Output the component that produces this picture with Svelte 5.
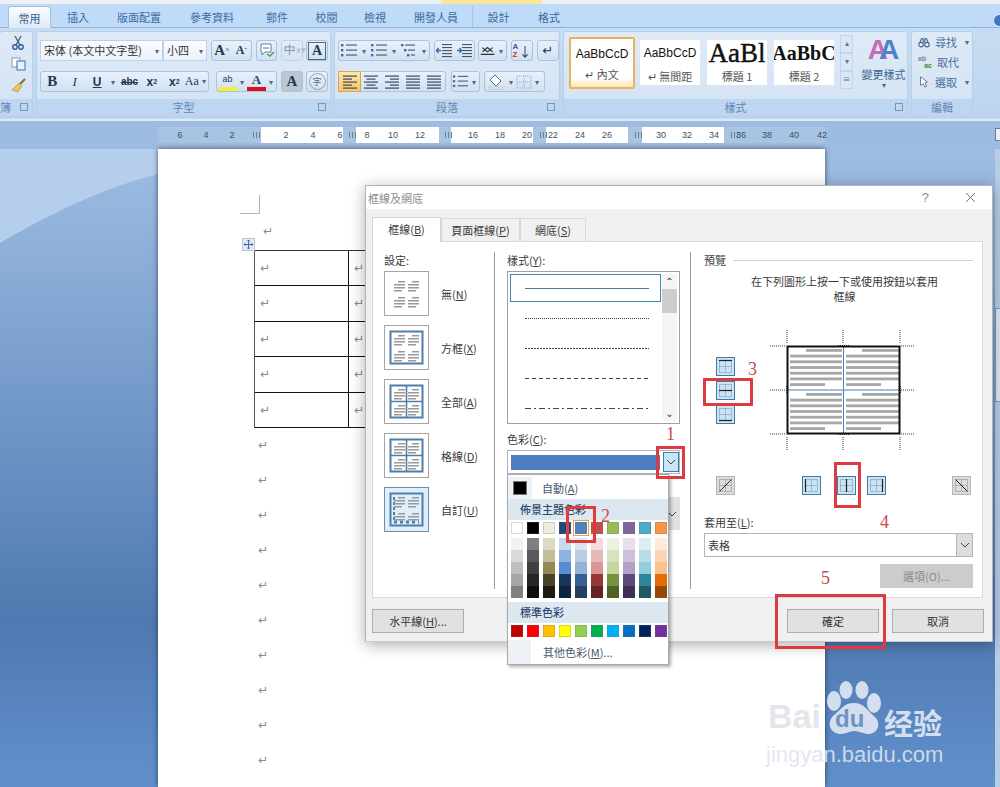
<script>
  const tabs = ['插入', '版面配置', '參考資料', '郵件', '校閱', '檢視', '開發人員'];
  const rulerNumbers = [
    [6, 180], [4, 206], [2, 232], [2, 286], [4, 313], [6, 340], [8, 367], [10, 393], [12, 420],
    [16, 473], [18, 500], [20, 527], [22, 553], [24, 580], [26, 607], [30, 661], [32, 687],
    [34, 714], [36, 741], [38, 767], [40, 794], [42, 822]
  ];
  const rulerWhite = [[261, 82], [356, 83], [451, 82], [546, 82], [642, 82]];
  const rulerHatch = [253, 349, 445, 540, 635, 731];
  const rows = [0, 1, 2, 3, 4];
  const marks = Array.from({ length: 10 }, (_, i) => i);
  const styles = [
    { sample: 'AaBbCcD', caption: '↵ 內文', cls: 'plain', selected: true },
    { sample: 'AaBbCcD', caption: '↵ 無間距', cls: 'plain' },
    { sample: 'AaBl', caption: '標題 1', cls: 'big' },
    { sample: 'AaBbC', caption: '標題 2', cls: 'mid' }
  ];
  const settings = [
    ['無(', 'N', ')', 'none'],
    ['方框(', 'X', ')', 'box'],
    ['全部(', 'A', ')', 'all'],
    ['格線(', 'D', ')', 'grid'],
    ['自訂(', 'U', ')', 'custom']
  ];
  const lineStyles = ['solid', 'dotted', 'dense', 'dashed', 'dashdot'];
  const theme = ['#ffffff', '#000000', '#eeece1', '#1f497d', '#4f81bd', '#c0504d', '#9bbb59', '#8064a2', '#4bacc6', '#f79646'];
  const tints = [
    ['#f2f2f2', '#d9d9d9', '#bfbfbf', '#a6a6a6', '#808080'],
    ['#7f7f7f', '#595959', '#3f3f3f', '#262626', '#0d0d0d'],
    ['#ddd9c3', '#c4bd97', '#938953', '#494429', '#1d1b10'],
    ['#c6d9f0', '#8db3e2', '#548dd4', '#17365d', '#0f243e'],
    ['#dbe5f1', '#b8cce4', '#95b3d7', '#366092', '#244061'],
    ['#f2dcdb', '#e5b9b7', '#d99694', '#953734', '#632423'],
    ['#ebf1dd', '#d7e3bc', '#c3d69b', '#76923c', '#4f6128'],
    ['#e5e0ec', '#ccc1d9', '#b2a2c7', '#5f497a', '#3f3151'],
    ['#dbeef3', '#b7dde8', '#92cddc', '#31859b', '#205867'],
    ['#fdeada', '#fbd5b5', '#fac08f', '#e36c09', '#974806']
  ];
  const standard = ['#c00000', '#ff0000', '#ffc000', '#ffff00', '#92d050', '#00b050', '#00b0f0', '#0070c0', '#002060', '#7030a0'];
  const previewLines = [16, 0, 0, 0, 0, 0, 0];
</script>

{#snippet alignIcon(kind)}
  <svg width="16" height="14" viewBox="0 0 16 14">
    {#each [1, 4, 7, 10, 13] as y, i}
      {@const w = kind === 'full' || i % 2 === 0 ? 14 : 9}
      {@const x = kind === 'left' || kind === 'full' ? 1 : kind === 'center' ? 8 - w / 2 : 15 - w}
      <rect {x} y={y - 0.5} width={w} height="1.2" fill="#3b4a5c" />
    {/each}
  </svg>
{/snippet}

{#snippet listIcon(kind)}
  <svg width="18" height="15" viewBox="0 0 18 15">
    {#each [2, 7, 12] as y, i}
      <rect x={kind === 'multi' ? 1 + i * 3 : 1} y={y - 1} width="2.4" height="2.4" fill="#3a6ea8" />
      <rect x={kind === 'multi' ? 5 + i * 3 : 6} y={y - 0.5} width={kind === 'multi' ? 10 - i * 3 : 11} height="1.1" fill="#4a5563" />
    {/each}
  </svg>
{/snippet}

{#snippet indentIcon(flip)}
  <svg width="17" height="15" viewBox="0 0 17 15">
    {#each [1, 4, 7, 10, 13] as y}
      <rect x="6" {y} width="10" height="1.1" fill="#4a5563" />
    {/each}
    <path d={flip ? 'M1 7.5h4M2.5 5l-2 2.5 2 2.5' : 'M1 7.5h4M3.5 5l2 2.5-2 2.5'} stroke="#2f69a8" stroke-width="1.3" fill="none" />
  </svg>
{/snippet}

{#snippet tableIcon(kind)}
  <svg class="grid-btn" width="19" height="19" viewBox="0 0 19 19">
    <rect x="0.5" y="0.5" width="18" height="18" fill={kind === 'slash' || kind === 'back' ? '#dcdcdc' : '#c9e3f7'} stroke={kind === 'slash' || kind === 'back' ? '#b5b5b5' : '#3f7ca6'} />
    <rect x="3.5" y="3.5" width="12" height="12" fill="none" stroke="#7a8a96" stroke-dasharray="1 1" />
    <path d="M9.5 3.5v12M3.5 9.5h12" stroke="#7a8a96" stroke-dasharray="1 1" fill="none" />
    {#if kind === 'top'}<path d="M3 3.5h13" stroke="#222" stroke-width="1.2" />{/if}
    {#if kind === 'h'}<path d="M3 9.5h13" stroke="#222" stroke-width="1.2" />{/if}
    {#if kind === 'bottom'}<path d="M3 15.5h13" stroke="#222" stroke-width="1.2" />{/if}
    {#if kind === 'left'}<path d="M3.5 3v13" stroke="#222" stroke-width="1.2" />{/if}
    {#if kind === 'v'}<path d="M9.5 3v13" stroke="#222" stroke-width="1.2" />{/if}
    {#if kind === 'right'}<path d="M15.5 3v13" stroke="#222" stroke-width="1.2" />{/if}
    {#if kind === 'slash'}<path d="M3.5 15.5l12-12" stroke="#222" />{/if}
    {#if kind === 'back'}<path d="M3.5 3.5l12 12" stroke="#222" />{/if}
  </svg>
{/snippet}

{#snippet settingIcon(kind)}
  <svg width="35" height="35" viewBox="0 0 35 35">
    {#if kind !== 'none'}
      <rect x="1.5" y="1.5" width="32" height="32" fill="none" stroke="#4f7fa8" stroke-width="2" />
    {/if}
    {#if kind === 'all' || kind === 'grid'}
      <path d="M17.5 1v33M1 17.5h33" stroke="#4f7fa8" stroke-width="1.6" />
    {/if}
    {#if kind === 'custom'}
      <path d="M5 5v25" stroke="#4f7fa8" stroke-width="2" stroke-dasharray="3 2" />
      <path d="M5 30h25" stroke="#4f7fa8" stroke-width="3" stroke-dasharray="3 3" />
    {/if}
    {#each [5, 8, 11, 14, 21, 24, 27, 30] as y, i}
      {#if kind !== 'custom' || y < 28}
        <rect x={i % 4 === 0 ? 9 : 5} {y} width={i % 4 === 3 ? 8 : i % 4 === 0 ? 7 : 11} height="1.5" fill="#9a9a9a" />
        <rect x={i % 4 === 0 ? 23 : 19} {y} width={i % 4 === 3 ? 8 : i % 4 === 0 ? 7 : 11} height="1.5" fill="#9a9a9a" />
      {/if}
    {/each}
  </svg>
{/snippet}

{#snippet chevron()}
  <svg width="10" height="6" viewBox="0 0 10 6"><path d="M1 1l4 4 4-4" stroke="#444" fill="none" /></svg>
{/snippet}

<div class="app">
  <header class="ribbon">
    <div class="caption-strip"><span class="contextual"></span></div>
    <nav class="tabs">
      <span class="tab active">常用</span>
      {#each tabs as t}<span class="tab">{t}</span>{/each}
      <span class="tab tool first">設計</span>
      <span class="tab tool">格式</span>
    </nav>
    <div class="groups">
      <section class="group clip">
        <div class="group-body clip-tools">
          <svg width="14" height="15" viewBox="0 0 14 15"><path d="M4 1l5 9M10 1L5 10" stroke="#55606e" stroke-width="1.4" fill="none" /><circle cx="4" cy="12" r="2.2" fill="none" stroke="#2f5f98" stroke-width="1.4" /><circle cx="10" cy="12" r="2.2" fill="none" stroke="#2f5f98" stroke-width="1.4" /></svg>
          <svg width="15" height="14" viewBox="0 0 15 14"><rect x="1" y="1" width="8" height="9" fill="#fff" stroke="#8a97a6" /><rect x="6" y="4" width="8" height="9" fill="#e8f1fb" stroke="#3c6fa8" /></svg>
          <svg width="15" height="15" viewBox="0 0 15 15"><path d="M14 1L8 7" stroke="#8d6a36" stroke-width="2" /><path d="M8 5l3 3-4 6-6-2z" fill="#e8c65c" stroke="#a58a3c" stroke-width=".6" /></svg>
        </div>
        <div class="group-label"><span class="cut">簿</span><i class="launcher"></i></div>
      </section>

      <section class="group font">
        <div class="group-body">
          <div class="tool-row">
            <span class="field w123">宋体 (本文中文字型)<b class="caret">▾</b></span>
            <span class="field w44">小四<b class="caret">▾</b></span>
            <span class="seg w41 gap4"><span class="btn serif-b">A<sup>^</sup></span><span class="btn serif-b small">A<sup>ˇ</sup></span></span>
            <span class="seg w21 gap4"><svg width="16" height="15" viewBox="0 0 16 15"><path d="M2 1h10v8H6l-3 3V9H2z" fill="#fff" stroke="#6d7f95" /><path d="M4 5h6" stroke="#5a6b80" /><path d="M8 11l3 2 4-4" stroke="#4aa04a" stroke-width="1.4" fill="none" /></svg></span>
            <span class="seg w22 gap4 dim"><span class="btn">中<small class="tiny">文字</small></span></span>
            <span class="seg w22 gap3"><span class="btn boxed-a">A</span></span>
          </div>
          <div class="tool-row">
            <span class="seg w169">
              <span class="btn serif-b">B</span><span class="btn italic">I</span><span class="btn under">U</span><b class="caret">▾</b>
              <span class="btn strike">abc</span><span class="btn sm">x<sub>2</sub></span><span class="btn sm">x<sup>2</sup></span><span class="btn serif-s">Aa<b class="caret">▾</b></span>
            </span>
            <span class="seg w61 gap7">
              <span class="btn hl">ab</span><b class="caret">▾</b><span class="btn color-a">A</span><b class="caret">▾</b>
            </span>
            <span class="seg w22 gap4 shaded"><span class="btn serif-b">A</span></span>
            <span class="seg w22 gap3"><span class="btn circled">字</span></span>
          </div>
        </div>
        <div class="group-label">字型<i class="launcher"></i></div>
      </section>

      <section class="group para">
        <div class="group-body">
          <div class="tool-row">
            <span class="seg w92">
              <span class="btn">{@render listIcon('bullet')}</span><b class="caret">▾</b>
              <span class="btn">{@render listIcon('number')}</span><b class="caret">▾</b>
              <span class="btn">{@render listIcon('multi')}</span><b class="caret">▾</b>
            </span>
            <span class="seg w41 gap4"><span class="btn">{@render indentIcon(true)}</span><span class="btn">{@render indentIcon(false)}</span></span>
            <span class="seg w29 gap3"><svg width="20" height="14" viewBox="0 0 20 14"><path d="M2 11h16M4 3l6 5 6-5M4 8l6-5 6 5" stroke="#2b3440" stroke-width="1.4" fill="none" /></svg><b class="caret">▾</b></span>
            <span class="seg w22 gap4"><span class="sort"><i>A</i><i class="z">Z</i></span><span class="arrow-d">↓</span></span>
            <span class="seg w22 gap4"><span class="para-mark">↵</span></span>
          </div>
          <div class="tool-row">
            <span class="seg w108">
              <span class="btn on">{@render alignIcon('left')}</span>
              <span class="btn">{@render alignIcon('center')}</span>
              <span class="btn">{@render alignIcon('right')}</span>
              <span class="btn">{@render alignIcon('full')}</span>
              <span class="btn">{@render alignIcon('full')}</span>
            </span>
            <span class="seg w29 gap5"><span class="btn">{@render listIcon('number')}</span><b class="caret">▾</b></span>
            <span class="seg w61 gap4">
              <svg width="18" height="16" viewBox="0 0 18 16"><path d="M7 1l6 6-5 5-6-6z" fill="#fff" stroke="#5b6b7e" /><rect x="1" y="13" width="14" height="2" fill="#e9eff7" stroke="#9aa7b6" stroke-width=".5" /></svg><b class="caret">▾</b>
              <svg width="16" height="14" viewBox="0 0 16 14"><rect x="1" y="1" width="14" height="12" fill="none" stroke="#9aa7b6" stroke-dasharray="1 1" /><path d="M8 1v12M1 7h14" stroke="#9aa7b6" stroke-dasharray="1 1" /></svg><b class="caret">▾</b>
            </span>
          </div>
        </div>
        <div class="group-label">段落<i class="launcher"></i></div>
      </section>

      <section class="group gallery">
        <div class="group-body gallery-body">
          {#each styles as s}
            <div class="style-item" class:selected={s.selected}>
              <span class="sample {s.cls}">{s.sample}</span>
              <span class="style-name">{s.caption}</span>
            </div>
          {/each}
          <div class="gallery-scroll"><i>▴</i><i>▾</i><i>≡</i></div>
          <div class="change-style">
            <span class="twin-a"><b class="pink">A</b><b class="blue">A</b></span>
            <span>變更樣式</span>
            <b class="caret">▾</b>
          </div>
        </div>
        <div class="group-label">樣式<i class="launcher"></i></div>
      </section>

      <section class="group edit">
        <div class="group-body edit-body">
          <div class="edit-row">
            <svg width="14" height="13" viewBox="0 0 14 13"><circle cx="3.5" cy="9" r="2.6" fill="#eaf1f8" stroke="#3b5a7e" stroke-width="1.2" /><circle cx="10.5" cy="9" r="2.6" fill="#eaf1f8" stroke="#3b5a7e" stroke-width="1.2" /><path d="M2 7l2-5h2v5M12 7l-2-5H8v5" fill="none" stroke="#3b5a7e" stroke-width="1.2" /></svg>
            尋找<b class="caret">▾</b>
          </div>
          <div class="edit-row"><span class="abac"><i>ab</i><i class="ac">ac</i></span>取代</div>
          <div class="edit-row">
            <svg width="14" height="14" viewBox="0 0 14 14"><path d="M3 1v10l3-2 2 4 2-1-2-4 3-1z" fill="#fff" stroke="#5c6a7c" /></svg>
            選取<b class="caret">▾</b>
          </div>
        </div>
        <div class="group-label">編輯</div>
      </section>
      <span class="help"></span>
    </div>
  </header>

  <div class="ruler-band">
    <div class="ruler">
      {#each rulerWhite as [x, w]}
        <i class="ruler-white" style="left:{x - 158}px;width:{w}px"></i>
      {/each}
      {#each rulerHatch as x}
        <i class="ruler-hatch" style="left:{x - 158}px"></i>
      {/each}
      {#each rulerNumbers as [n, x]}
        <span class="ruler-num" style="left:{x - 158}px">{n}</span>
      {/each}
    </div>
    <i class="ruler-toggle"></i>
  </div>

  <main class="workspace">
    <svg class="swoosh" width="158" height="95" viewBox="0 0 158 95"><path d="M0 0h158v25C100 40 50 65 0 94z" fill="#b5ceeb" /></svg>
    <div class="page">
      <div class="crop"></div>
      <p class="mark-line first-mark">↵</p>
      <span class="move-handle">
        <svg width="9" height="9" viewBox="0 0 9 9"><path d="M4.5 0v9M0 4.5h9M3 1.5l1.5-1.5L6 1.5M3 7.5L4.5 9 6 7.5M1.5 3L0 4.5 1.5 6M7.5 3L9 4.5 7.5 6" stroke="#2f5f98" fill="none" stroke-width=".9" /></svg>
      </span>
      <div class="doc-table">
        {#each rows as r}
          <div class="doc-cell">↵</div>
          <div class="doc-cell">↵</div>
          <div class="doc-cell"></div>
        {/each}
      </div>
      {#each marks as m}
        <p class="mark-line">↵</p>
      {/each}
    </div>
    <div class="vscroll"><i></i></div>
  </main>

  <div class="dialog">
    <div class="dialog-title">
      <span>框線及網底</span>
      <span class="title-buttons">
        <span class="q">?</span>
        <svg width="11" height="11" viewBox="0 0 11 11"><path d="M1 1l9 9M10 1l-9 9" stroke="#777" fill="none" /></svg>
      </span>
    </div>
    <div class="dialog-tabs">
      <span class="d-tab active">框線(<u>B</u>)</span>
      <span class="d-tab">頁面框線(<u>P</u>)</span>
      <span class="d-tab">網底(<u>S</u>)</span>
    </div>
    <div class="panel">
      <div class="col-setting">
        <div class="lbl setting-lbl">設定:</div>
        {#each settings as [a, k, z, kind]}
          <div class="setting-row">
            <span class="setting-box" class:current={kind === 'custom'}>{@render settingIcon(kind)}</span>
            <span>{a}<u>{k}</u>{z}</span>
          </div>
        {/each}
      </div>

      <div class="col-style">
        <div class="lbl">樣式(<u>Y</u>):</div>
        <div class="listbox">
          <div class="list-lines">
            {#each lineStyles as ls, i}
              <div class="line-item" class:picked={i === 0}><i class={ls}></i></div>
            {/each}
          </div>
          <div class="list-scroll"><span>⌃</span><i></i><span class="down">⌄</span></div>
        </div>
        <div class="lbl colour-lbl">色彩(<u>C</u>):</div>
        <div class="colour-combo">
          <i class="colour-fill"></i>
          <span class="combo-arrow hot">{@render chevron()}</span>
        </div>
        <div class="width-combo">{@render chevron()}</div>
      </div>

      <div class="col-preview">
        <div class="legend"><span>預覽</span><i></i></div>
        <p class="hint">在下列圖形上按一下或使用按鈕以套用<br />框線</p>
        <div class="preview-row">
          <div class="edge-stack">
            {@render tableIcon('top')}
            {@render tableIcon('h')}
            {@render tableIcon('bottom')}
          </div>
          <svg class="preview" width="146" height="120" viewBox="0 0 146 120">
            <g stroke="#333" stroke-dasharray="1 1" fill="none">
              <path d="M18 0v13M74 0v13M131 0v13M18 107v13M74 107v13M131 107v13M1 16h16M132 16h16M1 60h16M132 60h16M1 104h16M132 104h16" />
            </g>
            <path d="M69 16h11M69 104h11M18 56v8M131 56v8" stroke="#333" stroke-width="2" stroke-dasharray="1 1" />
            {#each [19, 63] as top}
              {#each previewLines as off, i}
                <rect x={21 + off} y={top + i * 5.7} width={(i === 6 ? 35 : 52) - off} height="2.8" fill="#a7a7a7" />
                <rect x={77 + off} y={top + i * 5.7} width={(i === 6 ? 35 : 53) - off} height="2.8" fill="#a7a7a7" />
              {/each}
            {/each}
            <path d="M74.5 16v88M18 60h113" stroke="#4f81bd" />
            <rect x="18.5" y="16.5" width="112" height="87" fill="none" stroke="#111" stroke-width="2" />
          </svg>
        </div>
        <div class="edge-row">
          {@render tableIcon('slash')}
          <div class="edge-mid">
            {@render tableIcon('left')}
            <span class="mid-gap">{@render tableIcon('v')}</span>
            {@render tableIcon('right')}
          </div>
          {@render tableIcon('back')}
        </div>
        <div class="lbl apply-lbl">套用至(<u>L</u>):</div>
        <div class="apply-combo">
          <span>表格</span>
          <span class="combo-arrow">{@render chevron()}</span>
        </div>
        <div class="options-row"><button class="dbtn disabled" type="button">選項(O)...</button></div>
      </div>
    </div>
    <div class="dialog-foot">
      <button class="dbtn" type="button">水平線(<u>H</u>)...</button>
      <span class="foot-right">
        <button class="dbtn" type="button">確定</button>
        <button class="dbtn" type="button">取消</button>
      </span>
    </div>

    <div class="palette">
      <div class="auto-row"><i class="auto-swatch"></i><span>自動(<u>A</u>)</span></div>
      <div class="pal-head">佈景主題色彩</div>
      <div class="swatches">
        {#each theme as c, i}
          <i class="sw" class:chosen={i === 4} style="background:{c}"></i>
        {/each}
      </div>
      <div class="tints">
        {#each tints as col}
          <div class="tint-col">
            {#each col as c}<i style="background:{c}"></i>{/each}
          </div>
        {/each}
      </div>
      <div class="pal-head std">標準色彩</div>
      <div class="swatches">
        {#each standard as c}
          <i class="sw" style="background:{c}"></i>
        {/each}
      </div>
      <div class="more-row"><span>其他色彩(<u>M</u>)...</span></div>
    </div>
  </div>

  <!-- red annotations drawn over the capture -->
  <i class="rbox r1"></i>
  <i class="rbox r2"></i>
  <i class="rbox r3"></i>
  <i class="rbox r4"></i>
  <i class="rbox r5"></i>
  <span class="num n1">1</span>
  <span class="num n2">2</span>
  <span class="num n3">3</span>
  <span class="num n4">4</span>
  <span class="num n5">5</span>

  <!-- watermark -->
  <div class="wm">
    <svg class="paw" width="74" height="66" viewBox="0 0 74 66">
      <ellipse cx="16" cy="20" rx="7" ry="10" />
      <ellipse cx="28" cy="9" rx="6.5" ry="9" />
      <ellipse cx="44" cy="9" rx="6.5" ry="9" />
      <ellipse cx="56" cy="22" rx="7" ry="10" />
      <path d="M36 22c10 0 14 8 21 14 7 7 2 18-8 17-5-1-9-3-13-3s-8 3-13 3c-10 0-15-10-8-18 7-5 10-13 21-13z" />
    </svg>
    <span class="wm-bai">Bai</span>
    <span class="wm-du">du</span>
    <span class="wm-cn">经验</span>
    <span class="wm-url">jingyan.baidu.com</span>
  </div>
</div>

<style>
  :global(body) {
    margin: 0;
    background: #fff;
  }

  .app {
    position: relative;
    width: 1000px;
    height: 787px;
    overflow: hidden;
    display: flex;
    flex-direction: column;
    font-family: "Noto Sans CJK TC", "Liberation Sans", sans-serif;
    font-size: 11px;
    color: #3b3b3b;
  }

  /* ribbon */
  .ribbon {
    height: 119px;
    background: #bfdaf6;
    border-bottom: 2px solid #dfeaf5;
    flex: none;
  }

  .caption-strip {
    height: 4px;
    background: #eef1f4;
    position: relative;
  }

  .contextual {
    position: absolute;
    left: 441px;
    width: 101px;
    height: 4px;
    background: #fbe69a;
  }

  .tabs {
    height: 24px;
    padding: 2px 0 0 8px;
    display: flex;
    border-bottom: 1px solid #8db2e3;
    box-sizing: border-box;
    background: #bfdbf7;
  }

  .tab {
    color: #3b6ca5;
    line-height: 22px;
    text-align: center;
    width: 50px;
  }

  .tab:nth-child(2) { width: 54px; }
  .tab:nth-child(3) { width: 68px; }
  .tab:nth-child(4) { width: 78px; }
  .tab:nth-child(5) { width: 52px; }
  .tab:nth-child(6) { width: 47px; }
  .tab:nth-child(7) { width: 50px; }
  .tab:nth-child(8) { width: 72px; }
  .tab:nth-child(9) { width: 51px; }

  .tab.active {
    width: 43px;
    background: linear-gradient(#fbfdff, #dde9f6);
    border: 1px solid #a3bfdf;
    border-bottom: none;
    border-radius: 3px 3px 0 0;
    height: 23px;
    color: #3e5f88;
    box-sizing: border-box;
  }

  .tab.tool.first {
    border-left: 1px solid #a8c5e4;
  }

  .groups {
    height: 90px;
    display: flex;
    gap: 3px;
    padding-top: 3px;
    box-sizing: border-box;
    background: linear-gradient(#c7dcf2, #bcd5ef);
    position: relative;
  }

  .group {
    display: flex;
    flex-direction: column;
    background: linear-gradient(#dfeaf7, #d2e2f3);
    border: 1px solid #b7d0ea;
    border-radius: 3px;
    box-sizing: border-box;
    height: 86px;
    flex: none;
  }

  .group-body {
    flex: 1;
    padding: 8px 0 0 3px;
    display: flex;
    flex-direction: column;
    gap: 10px;
    min-height: 0;
  }

  .group-label {
    height: 17px;
    line-height: 16px;
    text-align: center;
    background: #bed6ef;
    color: #5f86b4;
    position: relative;
    flex: none;
  }

  .cut {
    position: absolute;
    left: 0;
  }

  .launcher {
    position: absolute;
    right: 4px;
    top: 4px;
    width: 6px;
    height: 6px;
    border: 1px solid #7a95b5;
  }

  .clip { width: 33px; border-left: none; }
  .font { width: 295px; }
  .para { width: 226px; }
  .gallery { width: 345px; }
  .edit { width: 62px; }

  .clip-tools {
    padding: 3px 0 0 11px;
    gap: 7px;
    align-items: flex-start;
  }

  .tool-row {
    display: flex;
    height: 21px;
    align-items: stretch;
  }

  .field {
    background: linear-gradient(#fbfdff, #eaf2fa);
    border: 1px solid #bcd2e8;
    line-height: 19px;
    padding-left: 3px;
    box-sizing: border-box;
    display: flex;
    justify-content: space-between;
    white-space: nowrap;
    color: #333;
    overflow: hidden;
  }

  .caret {
    font-size: 8px;
    color: #55677c;
    font-weight: normal;
    padding: 0 3px;
    align-self: center;
    line-height: 1;
  }

  .seg {
    display: flex;
    align-items: center;
    justify-content: center;
    background: linear-gradient(#e8f1fa, #d1e1f2);
    border: 1px solid #a9c3df;
    border-radius: 3px;
    box-sizing: border-box;
    color: #27384d;
  }

  .w123 { width: 123px; }
  .w44 { width: 44px; }
  .w41 { width: 41px; }
  .w21 { width: 21px; }
  .w22 { width: 22px; }
  .w169 { width: 169px; }
  .w61 { width: 61px; }
  .w92 { width: 92px; }
  .w29 { width: 29px; }
  .w108 { width: 108px; }
  .gap3 { margin-left: 3px; }
  .gap4 { margin-left: 4px; }
  .gap5 { margin-left: 5px; }
  .gap7 { margin-left: 7px; }
  .dim { opacity: .55; }
  .shaded { background: #bcc6d1; }

  .btn {
    flex: 1;
    display: flex;
    justify-content: center;
    align-items: center;
    font-family: "Liberation Sans", sans-serif;
    font-size: 12px;
    height: 100%;
    min-width: 0;
    white-space: nowrap;
  }

  .btn sup, .btn sub {
    font-size: 7px;
    line-height: 1;
  }

  .serif-b {
    font-family: "Liberation Serif", serif;
    font-weight: bold;
    font-size: 15px;
  }

  .small { font-size: 12px; }

  .italic {
    font-family: "Liberation Serif", serif;
    font-style: italic;
    font-size: 13px;
  }

  .under {
    text-decoration: underline;
    font-weight: bold;
  }

  .strike {
    text-decoration: line-through;
    font-size: 10px;
    font-weight: bold;
  }

  .sm { font-weight: bold; }

  .serif-s {
    font-family: "Liberation Serif", serif;
    font-size: 12px;
  }

  .tiny {
    font-size: 5px;
    width: 5px;
    line-height: 1;
  }

  .boxed-a {
    font-family: "Liberation Serif", serif;
    font-weight: bold;
    font-size: 14px;
    border: 1px solid #55657a;
    margin: 1px;
    height: auto;
  }

  .hl {
    font-size: 9px;
    border-bottom: 4px solid #f5ee3a;
    height: 14px;
    margin-left: 1px;
    line-height: 1;
  }

  .color-a {
    font-family: "Liberation Serif", serif;
    font-weight: bold;
    font-size: 13px;
    color: #2c4a74;
    border-bottom: 4px solid #d8111c;
    height: 15px;
    line-height: 1;
  }

  .circled {
    border: 1px solid #777;
    border-radius: 50%;
    width: 15px;
    height: 15px;
    flex: none;
    font-size: 9px;
    font-family: inherit;
    opacity: .7;
  }

  .on {
    background: linear-gradient(#fde7a9, #f9c56a);
    outline: 1px solid #d3a85a;
  }

  .sort {
    display: flex;
    flex-direction: column;
    font-size: 8px;
    line-height: 8px;
    font-family: "Liberation Sans", sans-serif;
  }

  .sort i { font-style: normal; color: #2c5f9e; font-weight: bold; }
  .sort .z { color: #c0392b; }

  .arrow-d { font-size: 13px; line-height: 1; }

  .para-mark {
    font-family: "DejaVu Sans", sans-serif;
    font-size: 13px;
  }

  .gallery-body {
    flex-direction: row;
    gap: 4px;
    padding: 5px 0 0 5px;
    align-items: flex-start;
  }

  .style-item {
    width: 60px;
    height: 45px;
    margin-top: 3px;
    background: #fff;
    display: flex;
    flex-direction: column;
    align-items: center;
    justify-content: space-between;
    overflow: hidden;
    flex: none;
    padding-bottom: 1px;
    box-sizing: border-box;
  }

  .style-item + .style-item { margin-left: 3px; }
  .style-item.selected {
    width: 66px;
    height: 52px;
    margin-top: 0;
    margin-right: -2px;
    border: 2px solid #e6b45b;
    border-radius: 2px;
    background: linear-gradient(#fff, #fff 80%, #fde9b3);
    padding-top: 6px;
    padding-bottom: 5px;
  }

  .sample {
    font-family: "Liberation Sans", sans-serif;
    color: #111;
    white-space: nowrap;
  }

  .plain { font-size: 12px; line-height: 26px; }
  .style-item.selected .plain { line-height: 18px; }

  .big {
    font-family: "Liberation Serif", serif;
    font-size: 27px;
    line-height: 26px;
    -webkit-text-stroke: .4px #111;
  }

  .mid {
    font-family: "Liberation Serif", serif;
    font-weight: bold;
    font-size: 20px;
    line-height: 26px;
  }

  .style-name {
    color: #555;
    line-height: 16px;
  }

  .gallery-scroll {
    width: 13px;
    height: 54px;
    display: flex;
    flex-direction: column;
    margin: -2px 0 0 2px;
    flex: none;
  }

  .gallery-scroll i {
    flex: 1;
    font-style: normal;
    text-align: center;
    background: #d8e6f5;
    border: 1px solid #c0d4ea;
    font-size: 8px;
    color: #66788e;
    line-height: 14px;
  }

  .change-style {
    width: 50px;
    display: flex;
    flex-direction: column;
    align-items: center;
    margin: -3px 0 0 3px;
    color: #3c6390;
    line-height: 14px;
    white-space: nowrap;
  }

  .twin-a {
    height: 31px;
    overflow: hidden;
    display: flex;
    font-family: "Liberation Sans", sans-serif;
    font-size: 28px;
    line-height: 31px;
    margin-bottom: 2px;
  }

  .pink { color: #c56bb2; }
  .blue { color: #4d82c8; margin-left: -9px; }

  .edit-body {
    padding: 0 0 0 6px;
    gap: 0;
  }

  .edit-row {
    height: 20px;
    display: flex;
    align-items: center;
    gap: 5px;
    color: #4a6f9c;
    white-space: nowrap;
  }

  .abac {
    display: flex;
    flex-direction: column;
    font-size: 7px;
    line-height: 7px;
    width: 14px;
    font-family: "Liberation Sans", sans-serif;
    font-weight: bold;
  }

  .abac i { font-style: normal; color: #7b8794; }
  .abac .ac { color: #3c8f3c; text-align: right; }

  .help {
    position: absolute;
    right: -6px;
    top: -14px;
    width: 11px;
    height: 11px;
    border-radius: 50%;
    background: #3f77c4;
    border: 1px solid #e6eef8;
  }

  /* ruler */
  .ruler-band {
    height: 28px;
    flex: none;
    padding: 6px 0 0 158px;
    box-sizing: border-box;
    background: #9ebce2;
    position: relative;
  }

  .ruler {
    width: 667px;
    height: 16px;
    background: #a9c3e3;
    position: relative;
    font-size: 9px;
    font-family: "Liberation Sans", sans-serif;
    color: #3f4f63;
    line-height: 16px;
  }

  .ruler-white {
    position: absolute;
    top: 0;
    height: 16px;
    background: #fff;
  }

  .ruler-hatch {
    position: absolute;
    top: 5px;
    width: 7px;
    height: 6px;
    background: repeating-linear-gradient(90deg, #6f7f94 0 1px, transparent 1px 3px);
  }

  .ruler-num {
    position: absolute;
    transform: translateX(-50%);
  }

  .ruler-toggle {
    position: absolute;
    right: 0;
    top: 7px;
    width: 5px;
    height: 13px;
    background: #e8eff7;
    border: 1px solid #6c7c90;
    border-right: none;
    box-sizing: border-box;
  }

  /* document */
  .workspace {
    flex: 1;
    display: flex;
    min-height: 0;
    padding-left: 158px;
    position: relative;
    background: linear-gradient(#9ebde3 0, #96b6de 8%, #7399c9 40%, #4f79b0 74%, #6090cc 100%);
  }

  .swoosh {
    position: absolute;
    left: 0;
    top: 0;
  }

  .page {
    width: 667px;
    background: #fff;
    position: relative;
    box-shadow: 0 0 5px rgba(30, 40, 60, .75);
    padding-top: 46px;
    box-sizing: border-box;
    flex: none;
  }

  .crop {
    width: 20px;
    height: 19px;
    margin-left: 82px;
    border-right: 1px solid #b5b5b5;
    border-bottom: 1px solid #b5b5b5;
    box-sizing: border-box;
  }

  .mark-line {
    margin: 0;
    height: 35px;
    line-height: 35px;
    padding-left: 100px;
    font-family: "DejaVu Sans", sans-serif;
    font-size: 12px;
    color: #8a8a8a;
  }

  .first-mark {
    padding-left: 105px;
    height: 36px;
  }

  .move-handle {
    position: absolute;
    left: 84px;
    top: 89px;
    width: 11px;
    height: 11px;
    background: #e5edf6;
    border: 1px solid #b9c6d4;
    display: flex;
    align-items: center;
    justify-content: center;
  }

  .doc-table {
    margin-left: 96px;
    width: 340px;
    display: grid;
    grid-template-columns: 94px 1fr 1fr;
    grid-auto-rows: 35.4px;
    border-top: 1px solid #333;
    border-left: 1px solid #555;
  }

  .doc-cell {
    border-right: 1px solid #111;
    border-bottom: 1px solid #111;
    padding-left: 5px;
    line-height: 34px;
    font-family: "DejaVu Sans", sans-serif;
    font-size: 12px;
    color: #8a8a8a;
    box-sizing: border-box;
  }

  .vscroll {
    margin-left: auto;
    width: 5px;
    background: #b7cce5;
    padding-top: 159px;
    box-sizing: border-box;
    position: relative;
  }

  .vscroll i {
    display: block;
    height: 94px;
    background: #dfe8f3;
    border: 1px solid #7f99bb;
    border-right: none;
    box-sizing: border-box;
  }

  /* dialog */
  .dialog {
    position: absolute;
    left: 365px;
    top: 185px;
    width: 628px;
    height: 457px;
    background: #f0f0f0;
    border: 1px solid #aeb4bb;
    border-bottom-color: #c9c9c9;
    box-shadow: 0 3px 14px rgba(0, 0, 0, .32);
    box-sizing: border-box;
    color: #3a3a3a;
    display: flex;
    flex-direction: column;
  }

  .dialog-title {
    height: 23px;
    background: #fff;
    display: flex;
    justify-content: space-between;
    align-items: center;
    padding: 0 16px 0 2px;
    color: #8c8c8c;
    flex: none;
  }

  .title-buttons {
    display: flex;
    gap: 36px;
    align-items: center;
    font-family: "Liberation Sans", sans-serif;
  }

  .q { font-size: 13px; }

  .dialog-tabs {
    height: 25px;
    margin-top: 7px;
    padding-left: 6px;
    display: flex;
    align-items: flex-end;
    flex: none;
  }

  .d-tab {
    height: 23px;
    line-height: 22px;
    text-align: center;
    background: #f0f0f0;
    border: 1px solid #d9d9d9;
    border-bottom: none;
    box-sizing: border-box;
    width: 79px;
  }

  .d-tab + .d-tab + .d-tab { width: 66px; }

  .d-tab.active {
    width: 69px;
    height: 25px;
    background: #fff;
    position: relative;
    z-index: 1;
    margin-bottom: -1px;
    border-color: #d4d4d4;
  }

  .panel {
    margin-left: 6px;
    width: 611px;
    height: 357px;
    background: #fff;
    border: 1px solid #d9d9d9;
    box-sizing: border-box;
    display: flex;
    flex: none;
  }

  .col-setting {
    width: 121px;
    padding: 10px 0 0 11px;
    box-sizing: border-box;
    flex: none;
  }

  .lbl {
    line-height: 16px;
    height: 16px;
    white-space: nowrap;
  }

  .setting-lbl {
    margin-bottom: 3px;
  }

  .setting-row {
    display: flex;
    align-items: center;
    gap: 12px;
    height: 45px;
    margin-bottom: 9px;
  }

  .setting-box {
    width: 45px;
    height: 45px;
    background: #fff;
    border: 1px solid #a5a5a5;
    box-sizing: border-box;
    display: flex;
    align-items: center;
    justify-content: center;
    flex: none;
  }

  .setting-box.current {
    background: #dfeefb;
    border-color: #6e8ea8;
  }

  .col-style {
    width: 197px;
    margin: 10px 0 8px;
    padding-left: 12px;
    border-left: 1px solid #9b9b9b;
    border-right: 1px solid #9b9b9b;
    box-sizing: border-box;
    flex: none;
  }

  .listbox {
    margin-top: 3px;
    width: 173px;
    height: 153px;
    border: 1px solid #a0a0a0;
    display: flex;
    box-sizing: border-box;
    padding: 2px;
  }

  .list-lines {
    flex: 1;
    min-width: 0;
  }

  .line-item {
    height: 30px;
    display: flex;
    align-items: center;
    padding: 0 12px 0 15px;
    box-sizing: border-box;
  }

  .line-item i {
    display: block;
    width: 100%;
    height: 0;
    border-top: 1px solid #555;
  }

  .line-item.picked {
    height: 28px;
    margin-bottom: 1px;
    border: 1px solid #3f8ca5;
    padding: 0 11px 0 14px;
  }

  .line-item i.solid { border-top-color: #3f7ca6; }
  .line-item i.dotted { border-top: 1px dotted #444; }
  .line-item i.dense {
    border: none;
    height: 1px;
    background: repeating-linear-gradient(90deg, #444 0 2px, transparent 2px 3px);
  }
  .line-item i.dashed {
    border: none;
    height: 1px;
    background: repeating-linear-gradient(90deg, #444 0 4px, transparent 4px 7px);
  }
  .line-item i.dashdot {
    border: none;
    height: 1px;
    background: repeating-linear-gradient(90deg, #444 0 6px, transparent 6px 9px, #444 9px 11px, transparent 11px 14px);
  }

  .list-scroll {
    width: 15px;
    margin-left: 1px;
    display: flex;
    flex-direction: column;
    align-items: center;
    font-family: "DejaVu Sans", sans-serif;
    font-size: 10px;
    line-height: 15px;
    color: #333;
    background: #f5f5f5;
  }

  .list-scroll i {
    width: 100%;
    height: 24px;
    background: #cdcdcd;
    flex: none;
  }

  .list-scroll .down {
    margin-top: auto;
  }

  .colour-lbl {
    margin-top: 7px;
  }

  .colour-combo {
    margin-top: 3px;
    width: 173px;
    height: 24px;
    background: #fff;
    border: 1px solid #b5b5b5;
    box-sizing: border-box;
    display: flex;
    align-items: center;
    padding: 0 0 0 3px;
  }

  .colour-fill {
    width: 149px;
    height: 15px;
    background: #4b7dbf;
  }

  .combo-arrow {
    width: 16px;
    height: 100%;
    margin-left: auto;
    display: flex;
    align-items: center;
    justify-content: center;
    background: #dcdcdc;
    border-left: 1px solid #b5b5b5;
    box-sizing: border-box;
  }

  .combo-arrow.hot {
    height: 20px;
    background: #c9e3f7;
    border: 1px solid #3c7fb1;
  }

  .width-combo {
    margin-top: 23px;
    width: 173px;
    height: 33px;
    background: #e1e1e1;
    display: flex;
    align-items: center;
    justify-content: flex-end;
    padding-right: 3px;
    box-sizing: border-box;
  }

  .col-preview {
    flex: 1;
    padding: 10px 9px 0 13px;
    min-width: 0;
  }

  .legend {
    display: flex;
    align-items: center;
    gap: 7px;
    line-height: 16px;
  }

  .legend i {
    flex: 1;
    height: 1px;
    background: #cfcfcf;
  }

  .hint {
    margin: 6px 0 0;
    text-align: center;
    line-height: 15px;
    padding-left: 12px;
    white-space: nowrap;
  }

  .preview-row {
    margin-top: 26px;
    display: flex;
    align-items: center;
    height: 120px;
    padding-left: 12px;
  }

  .edge-stack {
    display: flex;
    flex-direction: column;
    gap: 5px;
    margin-right: 34px;
  }

  .grid-btn {
    display: block;
    flex: none;
  }

  .edge-row {
    margin-top: 26px;
    margin-left: 12px;
    width: 255px;
    display: flex;
    justify-content: space-between;
  }

  .edge-mid {
    display: flex;
  }

  .mid-gap {
    margin: 0 11px 0 16px;
  }

  .apply-lbl {
    margin-top: 19px;
  }

  .apply-combo {
    margin-top: 3px;
    height: 24px;
    border: 1px solid #b5b5b5;
    box-sizing: border-box;
    display: flex;
    align-items: center;
    padding-left: 3px;
  }

  .options-row {
    margin-top: 7px;
    display: flex;
    justify-content: flex-end;
  }

  .dbtn {
    width: 92px;
    height: 24px;
    padding: 0;
    background: #e1e1e1;
    border: 1px solid #adadad;
    border-radius: 0;
    font: inherit;
    color: #333;
  }

  .dbtn.disabled {
    width: 93px;
    background: #cccccc;
    border-color: #cccccc;
    color: #8a8a8a;
  }

  .dialog-foot {
    margin-top: 11px;
    padding: 0 8px 0 6px;
    display: flex;
    justify-content: space-between;
  }

  .foot-right {
    display: flex;
    gap: 13px;
  }

  /* colour dropdown */
  .palette {
    position: absolute;
    left: 141px;
    top: 288px;
    width: 162px;
    height: 191px;
    background: #fff;
    border: 1px solid #a7abb0;
    box-shadow: 2px 2px 3px rgba(0, 0, 0, .3);
    box-sizing: border-box;
    padding-top: 2px;
    z-index: 2;
  }

  .auto-row {
    height: 22px;
    display: flex;
    align-items: center;
    gap: 15px;
    padding-left: 5px;
    color: #44566e;
    background: linear-gradient(90deg, #eef2f6 0 24px, #fff 24px);
  }

  .auto-swatch {
    width: 14px;
    height: 14px;
    background: #000;
    border: 1px solid #777;
    box-sizing: border-box;
  }

  .pal-head {
    height: 21px;
    line-height: 20px;
    background: #dde7f0;
    padding-left: 12px;
    font-weight: 500;
    color: #2f4a70;
  }

  .pal-head.std {
    margin-top: 4px;
  }

  .swatches {
    display: flex;
    gap: 4px;
    padding: 2px 0 0 3px;
  }

  .sw {
    width: 12px;
    height: 12px;
    box-sizing: border-box;
    border: 1px solid rgba(110, 110, 110, .25);
    flex: none;
  }

  .sw.chosen {
    outline: 1px solid #e9a23b;
    outline-offset: 1px;
  }

  .tints {
    display: flex;
    gap: 4px;
    padding: 4px 0 0 3px;
  }

  .tint-col {
    width: 12px;
    display: flex;
    flex-direction: column;
    flex: none;
  }

  .tint-col i {
    height: 12px;
  }

  .more-row {
    margin-top: 3px;
    height: 24px;
    line-height: 24px;
    padding-left: 35px;
    color: #44566e;
    background: linear-gradient(90deg, #eef2f6 0 23px, #fff 23px);
  }

  /* annotations */
  .rbox {
    position: absolute;
    border: 3px solid #dd3b3f;
    box-sizing: border-box;
    z-index: 3;
  }

  .r1 { left: 656px; top: 446px; width: 29px; height: 33px; }
  .r2 { left: 566px; top: 506px; width: 30px; height: 37px; }
  .r3 { left: 703px; top: 378px; width: 50px; height: 28px; }
  .r4 { left: 834px; top: 462px; width: 27px; height: 46px; }
  .r5 { left: 775px; top: 594px; width: 111px; height: 55px; }

  .num {
    position: absolute;
    font-family: "Liberation Serif", serif;
    color: #c9494b;
    font-size: 18px;
    line-height: 18px;
    z-index: 3;
  }

  .n1 { left: 666px; top: 425px; }
  .n2 { left: 601px; top: 507px; }
  .n3 { left: 748px; top: 360px; }
  .n4 { left: 880px; top: 513px; }
  .n5 { left: 821px; top: 569px; }

  /* watermark */
  .wm {
    position: absolute;
    left: 760px;
    top: 675px;
    width: 200px;
    height: 100px;
    z-index: 4;
  }

  .paw {
    position: absolute;
    left: 58px;
    top: 6px;
    fill: rgba(225, 232, 243, .9);
  }

  .wm-bai {
    position: absolute;
    left: 8px;
    top: 22px;
    font-family: "Liberation Sans", sans-serif;
    font-weight: bold;
    font-size: 34px;
    line-height: 38px;
    color: rgba(222, 226, 232, .85);
  }

  .wm-du {
    position: absolute;
    left: 75px;
    top: 31px;
    font-family: "Liberation Sans", sans-serif;
    font-weight: bold;
    font-size: 24px;
    line-height: 26px;
    color: #6f93c4;
  }

  .wm-cn {
    position: absolute;
    left: 124px;
    top: 29px;
    font-size: 29px;
    line-height: 36px;
    font-weight: 700;
    white-space: nowrap;
    color: rgba(225, 232, 243, .92);
  }

  .wm-url {
    position: absolute;
    left: 6px;
    top: 67px;
    font-family: "Liberation Sans", sans-serif;
    font-size: 22px;
    line-height: 26px;
    white-space: nowrap;
    color: rgba(222, 228, 238, .88);
  }
</style>
